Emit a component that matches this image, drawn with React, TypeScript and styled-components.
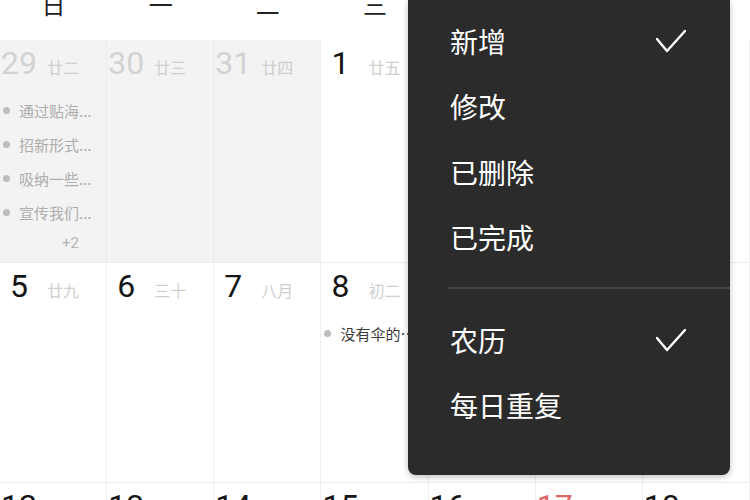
import * as React from 'react';
import styled, { createGlobalStyle } from 'styled-components';

const CJK = `'Noto Sans CJK SC', 'Noto Sans', sans-serif`;
const NUM = `Roboto, 'Noto Sans', sans-serif`;

const GlobalStyle = createGlobalStyle`
  html, body {
    margin: 0;
    padding: 0;
    background: #ffffff;
  }
  * {
    box-sizing: border-box;
  }
`;

interface IDay {
  day: number;
  lunar?: string;
  prev?: boolean;
  holiday?: boolean;
  events?: string[];
  more?: number;
}

const WEEKDAYS = ['日', '一', '二', '三', '四', '五', '六'];

const WEEKS: { height: number; days: IDay[] }[] = [
  {
    height: 223,
    days: [
      {
        day: 29,
        lunar: '廿二',
        prev: true,
        events: ['通过贴海...', '招新形式...', '吸纳一些...', '宣传我们...'],
        more: 2,
      },
      { day: 30, lunar: '廿三', prev: true },
      { day: 31, lunar: '廿四', prev: true },
      { day: 1, lunar: '廿五' },
      { day: 2, lunar: '廿六' },
      { day: 3, lunar: '廿七' },
      { day: 4, lunar: '廿八' },
    ],
  },
  {
    height: 220,
    days: [
      { day: 5, lunar: '廿九' },
      { day: 6, lunar: '三十' },
      { day: 7, lunar: '八月' },
      { day: 8, lunar: '初二', events: ['没有伞的孩子'] },
      { day: 9, lunar: '初三' },
      { day: 10, lunar: '初四' },
      { day: 11, lunar: '初五' },
    ],
  },
  {
    height: 120,
    days: [
      { day: 12, lunar: '初六' },
      { day: 13, lunar: '初七' },
      { day: 14, lunar: '初八' },
      { day: 15, lunar: '初九' },
      { day: 16, lunar: '初十' },
      { day: 17, lunar: '十一', holiday: true },
      { day: 18, lunar: '十二' },
    ],
  },
];

const MENU = [
  [
    { label: '新增', checked: true },
    { label: '修改' },
    { label: '已删除' },
    { label: '已完成' },
  ],
  [{ label: '农历', checked: true }, { label: '每日重复' }],
];

const CheckIcon = () => (
  <svg width="30" height="26" viewBox="0 0 30 26" fill="none">
    <polyline
      points="1,11 11,23 29,3"
      stroke="#ffffff"
      strokeWidth="2.4"
      strokeLinecap="round"
      strokeLinejoin="round"
    />
  </svg>
);

const DayCell = ({ day }: { day: IDay }) => (
  <Cell prev={day.prev ? 1 : 0}>
    <DateLine>
      <DateNumber prev={day.prev ? 1 : 0} holiday={day.holiday ? 1 : 0}>
        {day.day}
      </DateNumber>
      <Lunar>{day.lunar}</Lunar>
    </DateLine>
    {day.events && (
      <EventList>
        {day.events.map((text, i) => (
          <EventItem key={i} prev={day.prev ? 1 : 0}>
            <Dot />
            <EventText>{text}</EventText>
          </EventItem>
        ))}
      </EventList>
    )}
    {day.more && <More>+{day.more}</More>}
  </Cell>
);

const App = () => (
  <>
    <GlobalStyle />
    <Page>
      <Calendar>
        <WeekHeader>
          {WEEKDAYS.map(w => (
            <WeekdayLabel key={w}>{w}</WeekdayLabel>
          ))}
        </WeekHeader>
        {WEEKS.map((week, i) => (
          <WeekRow key={i} style={{ height: week.height }}>
            {week.days.map(d => (
              <DayCell key={d.day} day={d} />
            ))}
          </WeekRow>
        ))}
      </Calendar>

      <Menu>
        {MENU.map((group, gi) => (
          <React.Fragment key={gi}>
            {gi > 0 && <Divider />}
            {group.map(item => (
              <MenuItem key={item.label}>
                <span>{item.label}</span>
                {item.checked && <CheckIcon />}
              </MenuItem>
            ))}
          </React.Fragment>
        ))}
      </Menu>
    </Page>
  </>
);

const Page = styled.div`
  position: relative;
  width: 750px;
  height: 500px;
  overflow: hidden;
  background: #ffffff;
`;

const Calendar = styled.div`
  margin-top: -32px;
  display: flex;
  flex-direction: column;
`;

const WeekHeader = styled.div`
  display: grid;
  grid-template-columns: repeat(7, 1fr);
  height: 72px;
  align-items: center;
  background: #ffffff;
`;

const WeekdayLabel = styled.div`
  text-align: center;
  font-family: ${CJK};
  font-size: 24px;
  color: #222222;
  line-height: 1;
`;

const WeekRow = styled.div`
  display: grid;
  grid-template-columns: repeat(7, 1fr);
  border-bottom: 1px solid #ececec;
  flex-shrink: 0;
`;

const Cell = styled.div<{ prev: number }>`
  display: flex;
  flex-direction: column;
  padding-top: 5px;
  background: ${p => (p.prev ? '#f3f3f3' : '#ffffff')};
  border-right: 1px solid ${p => (p.prev ? '#ececec' : '#efefef')};
  overflow: hidden;
`;

const DateLine = styled.div`
  display: flex;
  align-items: baseline;
  height: 36px;
`;

const DateNumber = styled.span<{ prev: number; holiday: number }>`
  width: 38px;
  text-align: center;
  font-family: ${NUM};
  font-size: 32px;
  line-height: 36px;
  color: ${p => (p.prev ? '#d2d2d2' : p.holiday ? '#e06666' : '#151515')};
`;

const Lunar = styled.span`
  margin-left: 9px;
  font-family: ${CJK};
  font-size: 16px;
  color: #cfcfcf;
`;

const EventList = styled.div`
  display: flex;
  flex-direction: column;
  gap: 14px;
  margin-top: 19px;
`;

const EventItem = styled.div<{ prev: number }>`
  display: flex;
  align-items: center;
  gap: 9px;
  padding-left: 3px;
  height: 20px;
  color: ${p => (p.prev ? '#acacac' : '#3a3a3a')};
`;

const Dot = styled.span`
  flex-shrink: 0;
  width: 7px;
  height: 7px;
  border-radius: 50%;
  background: #bdbdbd;
`;

const EventText = styled.span`
  font-family: ${CJK};
  font-size: 15px;
  white-space: nowrap;
  overflow: hidden;
  text-overflow: ellipsis;
`;

const More = styled.div`
  margin-top: 12px;
  padding-left: 62px;
  font-family: ${NUM};
  font-size: 15px;
  color: #b5b5b5;
`;

const Menu = styled.div`
  position: absolute;
  top: 0;
  left: 408px;
  width: 322px;
  height: 475px;
  padding-top: 8px;
  background: #2b2b2b;
  border-radius: 0 0 8px 8px;
  box-shadow: 0 2px 6px rgba(0, 0, 0, 0.25);
`;

const MenuItem = styled.div`
  display: flex;
  align-items: center;
  justify-content: space-between;
  height: 65.5px;
  padding: 0 44px 0 42px;
  font-family: ${CJK};
  font-size: 28px;
  color: #ffffff;
`;

const Divider = styled.div`
  height: 2px;
  margin: 17px 0 18px 40px;
  background: #474747;
`;

export default App;
